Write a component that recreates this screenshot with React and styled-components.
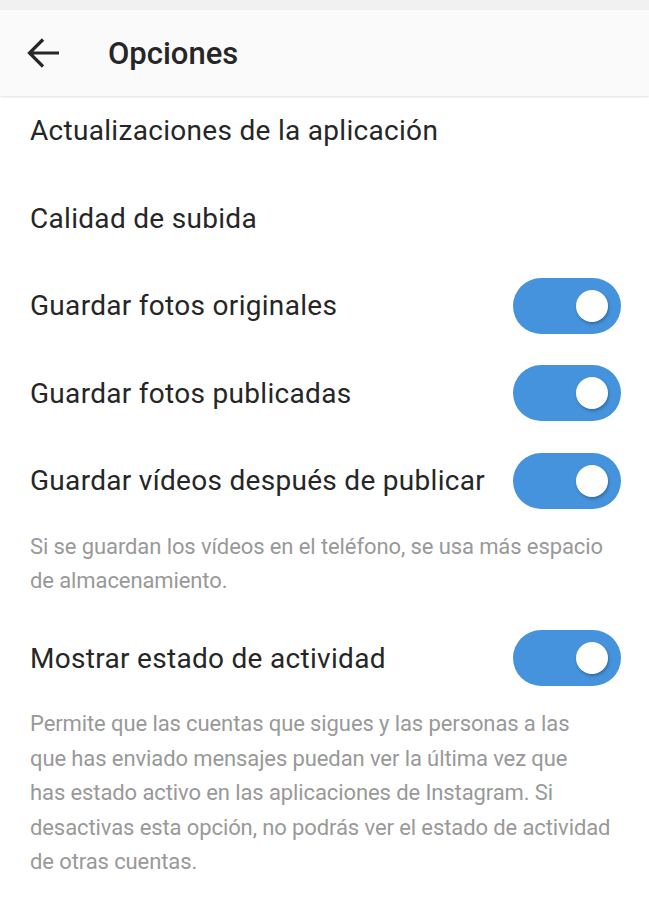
import React from 'react'
import styled, { createGlobalStyle } from 'styled-components'

const GlobalStyle = createGlobalStyle`
  html, body {
    margin: 0;
    padding: 0;
    background: #ffffff;
  }
  body {
    font-family: Roboto, "Noto Sans", "Liberation Sans", sans-serif;
    -webkit-font-smoothing: antialiased;
  }
`

const options = [
  { label: 'Actualizaciones de la aplicación' },
  { label: 'Calidad de subida' },
  { label: 'Guardar fotos originales', toggle: true },
  { label: 'Guardar fotos publicadas', toggle: true },
  {
    label: 'Guardar vídeos después de publicar',
    toggle: true,
    note: [
      'Si se guardan los vídeos en el teléfono, se usa más espacio',
      'de almacenamiento.',
    ],
  },
  {
    label: 'Mostrar estado de actividad',
    toggle: true,
    note: [
      'Permite que las cuentas que sigues y las personas a las',
      'que has enviado mensajes puedan ver la última vez que',
      'has estado activo en las aplicaciones de Instagram. Si',
      'desactivas esta opción, no podrás ver el estado de actividad',
      'de otras cuentas.',
    ],
  },
]

export default function App() {
  return (
    <Screen>
      <GlobalStyle />
      <StatusStrip />
      <Header>
        <BackButton aria-label="Atrás">
          <svg width="34" height="34" viewBox="0 0 34 34">
            <path
              d="M32 17H3M16 3.5L2.5 17L16 30.5"
              fill="none"
              stroke="#262626"
              strokeWidth="3.2"
              strokeLinecap="butt"
              strokeLinejoin="miter"
            />
          </svg>
        </BackButton>
        <Title>Opciones</Title>
      </Header>
      <List>
        {options.map((o) => (
          <Item key={o.label}>
            <Row>
              <Label>{o.label}</Label>
              {o.toggle && (
                <Switch>
                  <Knob />
                </Switch>
              )}
            </Row>
            {o.note && (
              <Note>
                {o.note.map((line) => (
                  <NoteLine key={line}>{line}</NoteLine>
                ))}
              </Note>
            )}
          </Item>
        ))}
      </List>
    </Screen>
  )
}

const Screen = styled.div`
  width: 649px;
  min-height: 905px;
  background: #ffffff;
  overflow: hidden;
`

const StatusStrip = styled.div`
  height: 10px;
  background: #f1f1f1;
`

const Header = styled.header`
  position: relative;
  z-index: 1;
  height: 86px;
  box-sizing: border-box;
  padding-left: 27px;
  display: flex;
  align-items: center;
  background: #fafafa;
  box-shadow: 0 1px 2px rgba(0, 0, 0, 0.12);
`

const BackButton = styled.div`
  width: 34px;
  height: 34px;
  display: flex;
  align-items: center;
  justify-content: center;
  margin-right: 47px;
`

const Title = styled.h1`
  margin: 0;
  font-size: 31px;
  font-weight: 500;
  color: #262626;
`

const List = styled.div`
  margin-top: -9px;
`

const Item = styled.div`
  display: flex;
  flex-direction: column;
`

const Row = styled.div`
  height: 87.5px;
  box-sizing: border-box;
  padding: 0 28px 0 30px;
  display: flex;
  align-items: center;
  justify-content: space-between;
`

const Label = styled.span`
  font-size: 28px;
  letter-spacing: 0.3px;
  color: #262626;
`

const Switch = styled.div`
  position: relative;
  width: 108px;
  height: 56px;
  border-radius: 28px;
  background: #4593dc;
  flex-shrink: 0;
`

const Knob = styled.div`
  position: absolute;
  top: 12px;
  right: 13px;
  width: 32px;
  height: 32px;
  border-radius: 50%;
  background: #ffffff;
  box-shadow: 1px 2px 3px rgba(0, 0, 0, 0.25);
`

const Note = styled.p`
  margin: 5px 0 16px;
  padding: 0 20px 0 30px;
  font-size: 22px;
  letter-spacing: -0.1px;
  line-height: 34.5px;
  color: #999999;
`

const NoteLine = styled.span`
  display: block;
  white-space: nowrap;
`
